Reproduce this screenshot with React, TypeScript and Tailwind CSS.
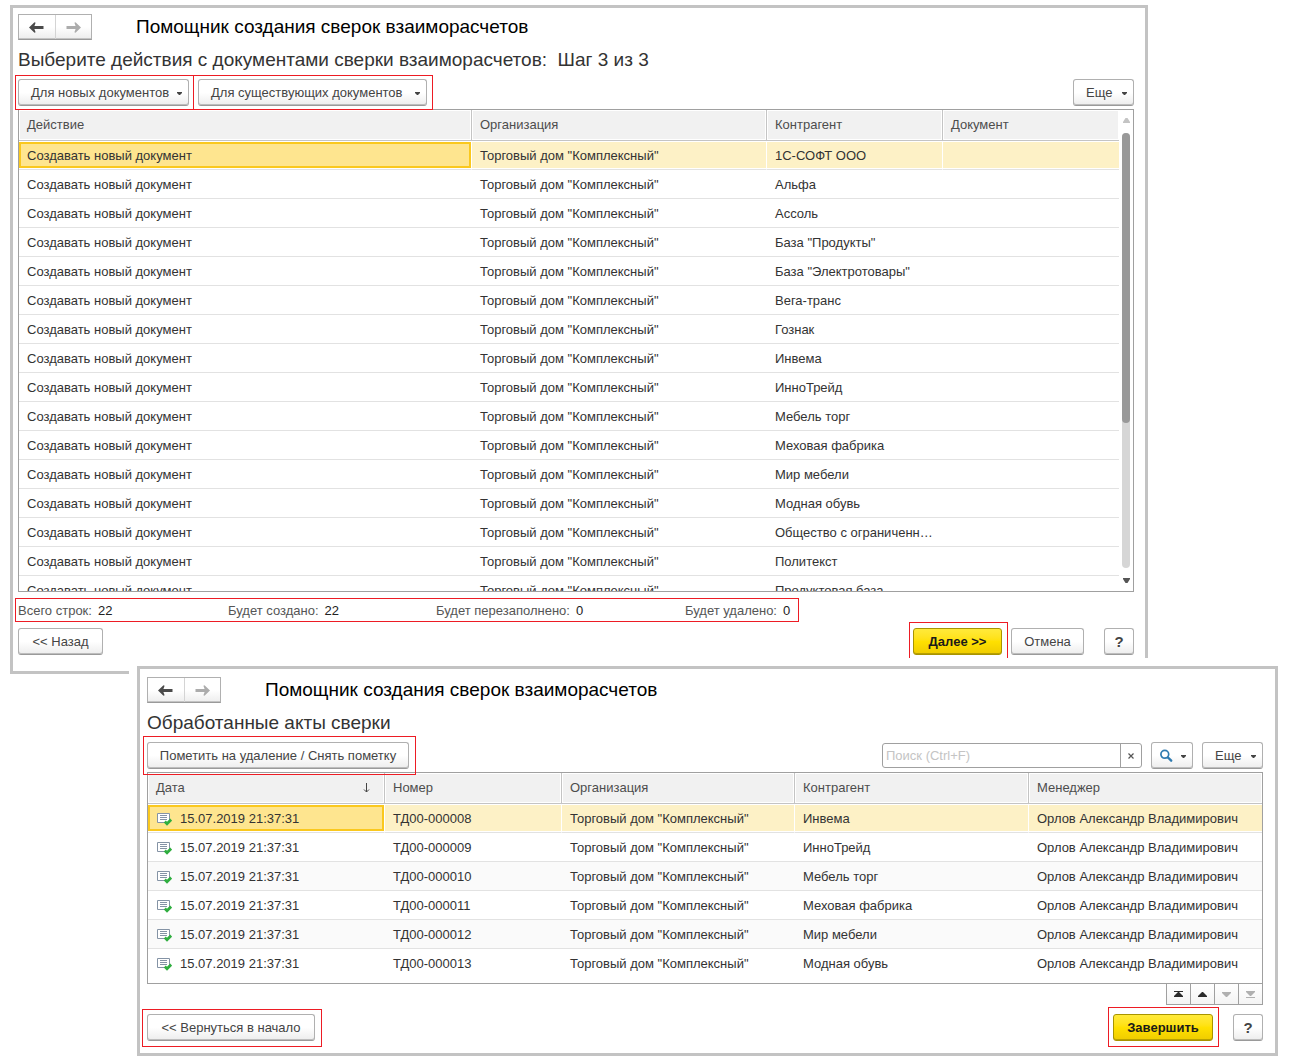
import type { ReactNode } from "react";

const raisedBase =
  "box-border flex h-[27px] shrink-0 items-center whitespace-nowrap rounded-[3px] border border-[#b0b0b0] border-b-[#9a9a9a] bg-linear-to-b from-white from-50% to-[#ededed] text-[#444] shadow-[inset_0_-1px_0_#bdbdbd]";

const raised = `${raisedBase} justify-center`;

const dropdown = `${raisedBase} justify-between pr-1.5`;

const primary =
  "box-border flex h-[27px] shrink-0 items-center justify-center whitespace-nowrap rounded-[3px] border border-[#a89400] bg-linear-to-b from-[#ffea3a] via-[#ffe000] to-[#efcc00] font-bold text-[#1a1a1a] shadow-[inset_0_-1px_0_#b8a000]";

function Caret() {
  return (
    <svg width="5" height="5" viewBox="0 -2 5 5" className="shrink-0" aria-hidden="true">
      <path d="M0 0h5v1L3 3H2L0 1z" fill="#444" />
    </svg>
  );
}

function Arrow({ flip, color }: { flip?: boolean; color: string }) {
  return (
    <svg width="15" height="11" viewBox="0 0 15 11" className={flip ? "rotate-180" : ""} aria-hidden="true">
      <path d="M0 5.5 5.5 0.2 6.6 0.8 5.4 4H14.5V7H5.4L6.6 10.2 5.5 10.8z" fill={color} />
    </svg>
  );
}

function Highlight({ className }: { className: string }) {
  return <span className={`pointer-events-none absolute z-10 border border-[#ed1c24] ${className}`} />;
}

function TitleBar({ children }: { children: ReactNode }) {
  return (
    <div className="flex h-[26px] items-center">
      <div className="flex h-full w-[74px] border border-[#b0b0b0] border-b-[#9a9a9a] bg-linear-to-b from-white from-50% to-[#ededed] shadow-[inset_0_-1px_0_#c4c4c4]">
        <button type="button" aria-label="Назад" className="flex flex-1 items-center justify-center border-r border-[#d4d4d4]">
          <Arrow color="#4a4a4a" />
        </button>
        <button type="button" aria-label="Вперед" className="flex flex-1 items-center justify-center">
          <Arrow flip color="#acacac" />
        </button>
      </div>
      <h1 className="ml-11 whitespace-nowrap text-[19px] text-black">{children}</h1>
    </div>
  );
}

function Subtitle({ children }: { children: ReactNode }) {
  return <h2 className="h-[39px] whitespace-pre text-[19px] leading-[39px] text-[#333]">{children}</h2>;
}

function Th({ children, last }: { children: ReactNode; last?: boolean }) {
  return (
    <th
      className={`h-[31px] border-b border-[#c4c4c4] bg-[#f1f1f1] pl-2 text-left font-normal text-[#4d4d4d] shadow-[inset_0_0_0_1px_white] ${last ? "" : "border-r"}`}
    >
      {children}
    </th>
  );
}

function Td({ children, current, focused, last }: { children: ReactNode; current: boolean; focused: boolean; last: boolean }) {
  if (focused)
    return (
      <td className="h-[29px] border-r border-b border-r-white border-b-[#e2e2e2] bg-white p-0 whitespace-nowrap">
        <div className="flex h-[26px] items-center border-2 border-[#fac81e] bg-[#fee58f] pt-0.5 pl-1.5">{children}</div>
      </td>
    );
  const tint = current ? "bg-[#fdf1c6] shadow-[inset_0_1px_0_white,inset_0_-1px_0_white]" : "";
  const divider = current && !last ? "border-r border-r-white" : "";
  return (
    <td className={`h-[29px] overflow-hidden border-b border-b-[#e2e2e2] pt-0.5 pl-2 whitespace-nowrap ${tint} ${divider}`}>
      {children}
    </td>
  );
}

const partners = [
  "1С-СОФТ ООО",
  "Альфа",
  "Ассоль",
  'База "Продукты"',
  'База "Электротовары"',
  "Вега-транс",
  "Гознак",
  "Инвема",
  "ИнноТрейд",
  "Мебель торг",
  "Меховая фабрика",
  "Мир мебели",
  "Модная обувь",
  "Общество с ограниченн…",
  "Политекст",
  "Продуктовая база",
];

const acts = [
  ["ТД00-000008", "Инвема"],
  ["ТД00-000009", "ИнноТрейд"],
  ["ТД00-000010", "Мебель торг"],
  ["ТД00-000011", "Меховая фабрика"],
  ["ТД00-000012", "Мир мебели"],
  ["ТД00-000013", "Модная обувь"],
];

function DocIcon() {
  return (
    <svg width="15" height="13" viewBox="0 0 15 13" className="shrink-0" aria-hidden="true">
      <path d="M0.5 0.5h12v9h-12z" fill="#fff" stroke="#8493a5" />
      <path d="M3 2.5h7M3 4.5h7M3 6.5h7" stroke="#8493a5" />
      <path d="M7.8 8.6 10 10.8 14.2 6.6" fill="none" stroke="#2fae3f" strokeWidth="2.8" />
    </svg>
  );
}

function Total({ label, value, className }: { label: string; value: number; className: string }) {
  return (
    <div className={`flex gap-1.5 whitespace-nowrap pt-0.5 ${className}`}>
      <dt>{label}</dt>
      <dd className="text-[#222]">{value}</dd>
    </div>
  );
}

function StepWindow() {
  return (
    <section className="mr-[142px] ml-2.5 border-3 border-[#c3c3c3] bg-white pt-1.5 pr-[11px] pb-4 pl-[5px]">
      <TitleBar>Помощник создания сверок взаиморасчетов</TitleBar>
      <Subtitle>{"Выберите действия с документами сверки взаиморасчетов:  Шаг 3 из 3"}</Subtitle>
      <div className="mb-[3px] flex items-center gap-[9px]">
        <div className="relative">
          <Highlight className="-top-1 -right-[5px] -bottom-1 -left-[3px]" />
          <button type="button" className={`${dropdown} w-[171px] pl-3`}>
            Для новых документов <Caret />
          </button>
        </div>
        <div className="relative">
          <Highlight className="-top-1 -right-1.5 -bottom-1 -left-[5px]" />
          <button type="button" className={`${dropdown} w-[229px] pl-3`}>
            Для существующих документов <Caret />
          </button>
        </div>
        <button type="button" className={`${dropdown} ml-auto w-[61px] pl-3`}>
          Еще <Caret />
        </button>
      </div>

      <div className="flex h-[483px] overflow-hidden border border-[#a0a0a0]">
        <div className="flex-1 overflow-hidden">
          <table className="w-full table-fixed border-separate border-spacing-0">
            <colgroup>
              <col />
              <col className="w-[295px]" />
              <col className="w-[176px]" />
              <col className="w-[176px]" />
            </colgroup>
            <thead>
              <tr>
                <Th>Действие</Th>
                <Th>Организация</Th>
                <Th>Контрагент</Th>
                <Th last>Документ</Th>
              </tr>
            </thead>
            <tbody>
              {partners.map((partner, row) => (
                <tr key={partner}>
                  {["Создавать новый документ", 'Торговый дом "Комплексный"', partner, ""].map((text, col) => (
                    <Td key={col} current={row === 0} focused={row === 0 && col === 0} last={col === 3}>
                      {text}
                    </Td>
                  ))}
                </tr>
              ))}
            </tbody>
          </table>
        </div>
        <div className="flex w-[14px] flex-col items-center pt-2 pb-2">
          <svg width="7" height="5" viewBox="0 0 7 5" aria-hidden="true">
            <path d="M2.5 0h2L7 4v1H0V4z" fill="#c4c4c4" />
          </svg>
          <div className="my-2.5 w-2 flex-1 rounded-full bg-[#d6d6d6]">
            <div className="h-2/3 rounded-full bg-[#999]" />
          </div>
          <svg width="7" height="5" viewBox="0 0 7 5" aria-hidden="true">
            <path d="M2.5 5h2L7 1V0H0v1z" fill="#555" />
          </svg>
        </div>
      </div>

      <dl className="relative flex h-9 w-[778px] items-center text-[#555]">
        <Highlight className="top-1.5 -right-[3px] bottom-1.5 -left-[3px]" />
        <Total className="w-[210px]" label="Всего строк:" value={22} />
        <Total className="w-[208px]" label="Будет создано:" value={22} />
        <Total className="w-[249px]" label="Будет перезаполнено:" value={0} />
        <Total className="" label="Будет удалено:" value={0} />
      </dl>

      <div className="flex items-center">
        <button type="button" className={`${raised} w-[85px]`}>
          {"<< Назад"}
        </button>
        <div className="relative ml-auto">
          <Highlight className="-top-1.5 -right-1.5 -bottom-2 -left-1" />
          <button type="button" className={`${primary} w-[89px]`}>
            {"Далее >>"}
          </button>
        </div>
        <button type="button" className={`${raised} ml-[9px] w-[73px]`}>
          Отмена
        </button>
        <button type="button" className={`${raised} ml-5 w-[30px] text-[15px] font-bold`}>
          ?
        </button>
      </div>
    </section>
  );
}

const pager = [
  { label: "В начало", d: "M0 0h9v1H0zM4 1h1l4 4v1H0V5z", fill: "#2b2b2b" },
  { label: "Вверх", d: "M4 1h1l4 4v1H0V5z", fill: "#2b2b2b" },
  { label: "Вниз", d: "M4 6h1l4-4V1H0v1z", fill: "#b0b0b0" },
  { label: "В конец", d: "M0 6h9v1H0zM4 5h1l4-4V0H0v1z", fill: "#b0b0b0" },
];

function ResultWindow() {
  return (
    <div className="relative z-20 -mt-4 mr-3 ml-[129px] bg-white pt-2 pl-2">
      <section className="border-3 border-[#c3c3c3] bg-white pt-2 pr-3 pb-3 pl-[7px]">
        <TitleBar>Помощник создания сверок взаиморасчетов</TitleBar>
        <Subtitle>Обработанные акты сверки</Subtitle>
        <div className="mb-[3px] flex items-center">
          <div className="relative">
            <Highlight className="-top-1.5 -right-[7px] -bottom-1.5 -left-1" />
            <button type="button" className={`${raised} w-[262px]`}>
              Пометить на удаление / Снять пометку
            </button>
          </div>
          <div className="ml-auto flex h-[25px] w-[260px] overflow-hidden rounded-[3px] border border-[#a0a0a0]">
            <input
              type="text"
              aria-label="Поиск"
              placeholder="Поиск (Ctrl+F)"
              className="min-w-0 flex-1 pl-[3px] outline-none placeholder:text-[#c4c4c4]"
            />
            <button type="button" aria-label="Очистить" className="flex w-[21px] items-center justify-center border-l border-[#a0a0a0]">
              <svg width="6" height="6" viewBox="0 0 6 6" aria-hidden="true">
                <path d="M0.5 0.5l5 5M5.5 0.5l-5 5" stroke="#555" strokeWidth="1.2" />
              </svg>
            </button>
          </div>
          <button type="button" aria-label="Найти" className={`${dropdown} ml-[9px] w-[42px] pl-2`}>
            <svg width="13" height="14" viewBox="0 0 13 14" aria-hidden="true">
              <circle cx="4.8" cy="5.3" r="3.9" fill="none" stroke="#2f7bb0" strokeWidth="1.7" />
              <path d="M8 8.5l3.2 3.2" stroke="#2f7bb0" strokeWidth="2.4" strokeLinecap="round" />
            </svg>
            <Caret />
          </button>
          <button type="button" className={`${dropdown} ml-[9px] w-[61px] pl-3`}>
            Еще <Caret />
          </button>
        </div>

        <div className="border border-[#a0a0a0] pb-[5px]">
          <table className="w-full table-fixed border-separate border-spacing-0">
            <colgroup>
              <col />
              <col className="w-[177px]" />
              <col className="w-[233px]" />
              <col className="w-[234px]" />
              <col className="w-[233px]" />
            </colgroup>
            <thead>
              <tr>
                <Th>
                  <span className="flex items-center justify-between pr-3.5">
                    Дата
                    <svg width="7" height="10" viewBox="0 0 7 10" aria-hidden="true">
                      <path d="M3.5 0v9M1 6.5l2.5 2.5L6 6.5" fill="none" stroke="#444" />
                    </svg>
                  </span>
                </Th>
                <Th>Номер</Th>
                <Th>Организация</Th>
                <Th>Контрагент</Th>
                <Th last>Менеджер</Th>
              </tr>
            </thead>
            <tbody className="[&>tr:last-child>td]:border-b-transparent">
              {acts.map(([number, partner], row) => (
                <tr key={number} className="odd:bg-[#fafafa]">
                  {["15.07.2019 21:37:31", number, 'Торговый дом "Комплексный"', partner, "Орлов Александр Владимирович"].map(
                    (text, col) => (
                      <Td key={col} current={row === 0} focused={row === 0 && col === 0} last={col === 4}>
                        {col === 0 ? (
                          <span className="flex items-center gap-2 pl-px">
                            <DocIcon />
                            {text}
                          </span>
                        ) : (
                          text
                        )}
                      </Td>
                    ),
                  )}
                </tr>
              ))}
            </tbody>
          </table>
        </div>
        <div className="ml-auto flex h-[21px] w-[97px] border-r border-b border-[#a0a0a0]">
          {pager.map((item) => (
            <button
              key={item.label}
              type="button"
              aria-label={item.label}
              className="flex flex-1 items-center justify-center border-l border-[#a0a0a0] bg-linear-to-b from-white to-[#f4f4f4]"
            >
              <svg width="9" height="7" viewBox="0 0 9 7" aria-hidden="true">
                <path d={item.d} fill={item.fill} />
              </svg>
            </button>
          ))}
        </div>

        <div className="mt-[9px] flex items-center">
          <div className="relative">
            <Highlight className="-top-[5px] -right-[7px] -bottom-1.5 -left-[5px]" />
            <button type="button" className={`${raised} w-[168px]`}>
              {"<< Вернуться в начало"}
            </button>
          </div>
          <div className="relative ml-auto">
            <Highlight className="-top-[7px] -right-1.5 -bottom-1.5 -left-[5px]" />
            <button type="button" className={`${primary} w-[100px]`}>
              Завершить
            </button>
          </div>
          <button type="button" className={`${raised} ml-5 w-[30px] text-[15px] font-bold`}>
            ?
          </button>
        </div>
      </section>
    </div>
  );
}

export default function App() {
  return (
    <main className="min-h-screen bg-white pt-[5px] pb-1.5 font-['Liberation_Sans',Arial,sans-serif] text-[13px] leading-4 text-[#333]">
      <StepWindow />
      <ResultWindow />
    </main>
  );
}
